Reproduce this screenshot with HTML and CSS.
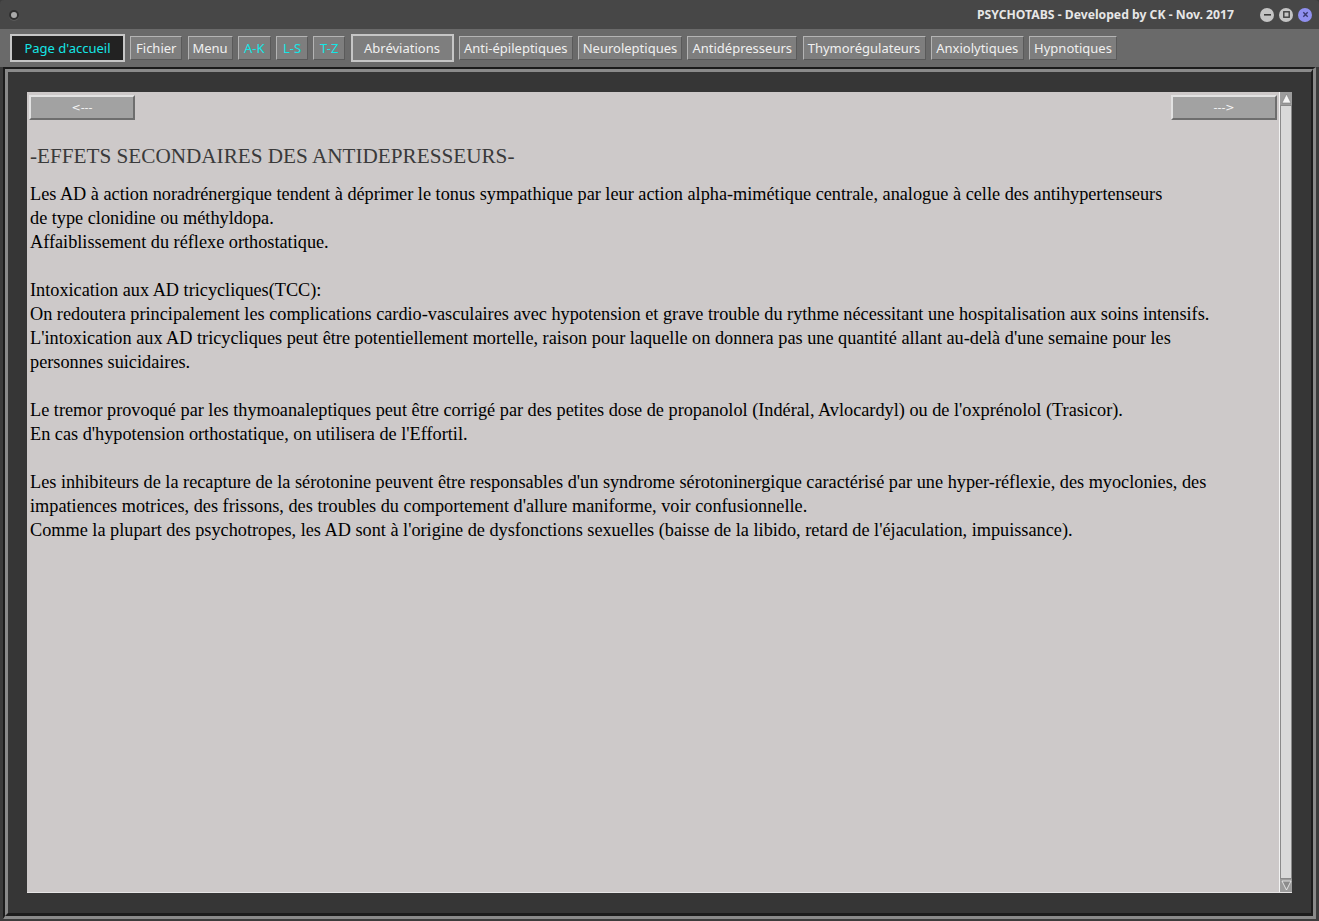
FILE: index.html
```html
<!DOCTYPE html>
<html lang="fr">
<head>
<meta charset="utf-8">
<title>PSYCHOTABS</title>
<link rel="stylesheet" href="styles.css">
</head>
<body>
<div class="window">
  <div class="titlebar">
    <span class="win-dot"></span>
    <span class="title">PSYCHOTABS - Developed by CK - Nov. 2017</span>
    <div class="win-btns">
      <span class="wb wb-min"><svg width="13" height="13" viewBox="0 0 13 13"><rect x="3" y="6" width="7" height="1.6" fill="#3c3c3c"/></svg></span>
      <span class="wb wb-max"><svg width="13" height="13" viewBox="0 0 13 13"><rect x="3.8" y="3.8" width="5.4" height="5.4" fill="none" stroke="#3c3c3c" stroke-width="1.4"/></svg></span>
      <span class="wb wb-close"><svg width="13" height="13" viewBox="0 0 13 13"><path d="M4.3 4.3 L8.7 8.7 M8.7 4.3 L4.3 8.7" stroke="#3a3a70" stroke-width="1.4"/></svg></span>
    </div>
  </div>
  <div class="toolbar">
    <span class="tb tb-big tb-home">Page d'accueil</span>
    <span class="tb b-fichier">Fichier</span>
    <span class="tb b-menu">Menu</span>
    <span class="tb tb-cyan b-ak">A-K</span>
    <span class="tb tb-cyan b-ls">L-S</span>
    <span class="tb tb-cyan b-tz">T-Z</span>
    <span class="tb tb-big tb-abr">Abréviations</span>
    <span class="tb b-antiep">Anti-épileptiques</span>
    <span class="tb b-neuro">Neuroleptiques</span>
    <span class="tb b-antidep">Antidépresseurs</span>
    <span class="tb b-thymo">Thymorégulateurs</span>
    <span class="tb b-anxio">Anxiolytiques</span>
    <span class="tb b-hypno">Hypnotiques</span>
  </div>
  <div class="frame">
    <div class="frame-inner">
      <div class="panel">
        <div class="textarea">
          <div class="navrow">
            <span class="navbtn">&lt;---</span>
            <span class="navbtn">---&gt;</span>
          </div>
          <h1 class="heading">-EFFETS SECONDAIRES DES ANTIDEPRESSEURS-</h1>
          <div class="body">
            <p class="line">Les AD à action noradrénergique tendent à déprimer le tonus sympathique par leur action alpha-mimétique centrale, analogue à celle des antihypertenseurs</p>
            <p class="line">de type clonidine ou méthyldopa.</p>
            <p class="line">Affaiblissement du réflexe orthostatique.</p>
            <p class="line blank">&nbsp;</p>
            <p class="line">Intoxication aux AD tricycliques(TCC):</p>
            <p class="line">On redoutera principalement les complications cardio-vasculaires avec hypotension et grave trouble du rythme nécessitant une hospitalisation aux soins intensifs.</p>
            <p class="line">L'intoxication aux AD tricycliques peut être potentiellement mortelle, raison pour laquelle on donnera pas une quantité allant au-delà d'une semaine pour les</p>
            <p class="line">personnes suicidaires.</p>
            <p class="line blank">&nbsp;</p>
            <p class="line">Le tremor provoqué par les thymoanaleptiques peut être corrigé par des petites dose de propanolol (Indéral, Avlocardyl) ou de l'oxprénolol (Trasicor).</p>
            <p class="line">En cas d'hypotension orthostatique, on utilisera de l'Effortil.</p>
            <p class="line blank">&nbsp;</p>
            <p class="line">Les inhibiteurs de la recapture de la sérotonine peuvent être responsables d'un syndrome sérotoninergique caractérisé par une hyper-réflexie, des myoclonies, des</p>
            <p class="line">impatiences motrices, des frissons, des troubles du comportement d'allure maniforme, voir confusionnelle.</p>
            <p class="line">Comme la plupart des psychotropes, les AD sont à l'origine de dysfonctions sexuelles (baisse de la libido, retard de l'éjaculation, impuissance).</p>
          </div>
        </div>
        <div class="scrollbar">
          <span class="arrow arrow-up"><svg width="11" height="11" viewBox="0 0 11 11"><path d="M5.5 1 L10 10 L1 10 Z" fill="#f4f4f4" stroke="#7a7a7a" stroke-width="0.6"/></svg></span>
          <span class="trough"></span>
          <span class="arrow arrow-down"><svg width="11" height="11" viewBox="0 0 11 11"><path d="M1 1 L10 1 L5.5 10 Z" fill="#8c8c8c" stroke="#f4f4f4" stroke-width="0.8"/></svg></span>
        </div>
      </div>
    </div>
  </div>
</div>
</body>
</html>
```

FILE: styles.css
```css
* { box-sizing: border-box; }
html, body { margin: 0; padding: 0; }
body {
  width: 1319px;
  height: 921px;
  background: #3a3a3a;
  overflow: hidden;
  font-family: "Noto Sans", "DejaVu Sans", sans-serif;
}
.window {
  width: 1319px;
  height: 921px;
  display: flex;
  flex-direction: column;
  background: #3c3c3c;
}
.titlebar {
  height: 29px;
  background: #474747;
  display: flex;
  align-items: center;
  padding: 0 7px 0 9px;
  border-radius: 4px 4px 0 0;
}
.win-dot {
  width: 10px;
  height: 10px;
  border-radius: 50%;
  background: #a9a9a9;
  border: 2px solid #2e2e2e;
  box-shadow: 0 1px 0 #5a5a5a;
}
.title {
  margin-left: auto;
  color: #e6e6e6;
  font-weight: bold;
  font-size: 12.2px;
  margin-right: 26px;
}
.win-btns {
  display: flex;
  gap: 5px;
}
.wb {
  width: 14px;
  height: 14px;
  border-radius: 50%;
  display: flex;
  align-items: center;
  justify-content: center;
  background: #c4c4c4;
}
.wb-close { background: #9090f0; }
.toolbar {
  height: 38px;
  background: #6a6a6a;
  display: flex;
  align-items: center;
  padding: 0 0 0 10px;
  gap: 5.25px;
}
.tb {
  height: 24px;
  padding: 0;
  display: flex;
  align-items: center;
  justify-content: center;
  flex: none;
  background: #7e7e7e;
  color: #f0f0f0;
  font-size: 13px;
  border-top: 1px solid #b4b4b4;
  border-left: 1px solid #b4b4b4;
  border-right: 1px solid #5a5a5a;
  border-bottom: 1px solid #5a5a5a;
  white-space: nowrap;
}
.tb-cyan { color: #14e6e6; }
.tb-big {
  height: 28px;
  border: 2px solid #c6c6c6;
}
.tb-home {
  background: #222222;
  color: #14e6e6;
  width: 115px;
}
.tb-abr { width: 103px; }
.b-fichier { width: 52px; }
.b-menu { width: 45px; }
.b-ak { width: 33px; }
.b-ls { width: 32px; }
.b-tz { width: 32px; }
.b-antiep { width: 114px; }
.b-neuro { width: 104px; }
.b-antidep { width: 110px; }
.b-thymo { width: 123px; }
.b-anxio { width: 93px; }
.b-hypno { width: 88px; }
.frame {
  flex: 1;
  margin: 0 3px 2px 3px;
  border-top: 2px solid #1c1c1c;
  border-left: 2px solid #1c1c1c;
  border-right: 3px solid #8a8a8a;
  border-bottom: 3px solid #8a8a8a;
  display: flex;
}
.frame-inner {
  flex: 1;
  border-top: 3px solid #8a8a8a;
  border-left: 3px solid #8a8a8a;
  border-right: 2px solid #1c1c1c;
  border-bottom: 3px solid #1c1c1c;
  background: #363636;
  padding: 20px 19px 20px 19px;
  display: flex;
}
.panel {
  flex: 1;
  background: #cdc9c9;
  display: flex;
  border-bottom: 1px solid #e6e4e4;
}
.textarea {
  flex: 1;
  padding: 3px 2px 0 2px;
  font-family: "Liberation Serif", "Times New Roman", serif;
}
.navrow {
  display: flex;
  justify-content: space-between;
}
.navbtn {
  width: 106px;
  height: 25px;
  background: #a2a2a2;
  color: #f6f6f6;
  font-family: "DejaVu Sans", sans-serif;
  font-size: 11px;
  display: flex;
  align-items: center;
  justify-content: center;
  border-top: 2px solid #e2e2e2;
  border-left: 2px solid #e2e2e2;
  border-right: 2px solid #6e6e6e;
  border-bottom: 2px solid #6e6e6e;
}
.heading {
  margin: 23px 0 0 1px;
  font-weight: normal;
  font-size: 21.2px;
  line-height: 26px;
  color: #3a3a3a;
}
.body {
  margin: 13px 0 0 1px;
  font-size: 18.25px;
  line-height: 24px;
  color: #000;
}
.line {
  margin: 0;
  white-space: nowrap;
}
.scrollbar {
  width: 13px;
  display: flex;
  flex-direction: column;
  background: #d9d9d9;
  border-left: 1px solid #f2f2f2;
}
.arrow {
  height: 13px;
  background: #9c9c9c;
  display: flex;
  align-items: center;
  justify-content: center;
}
.trough {
  flex: 1;
  border: 1px solid #8a8a8a;
  background: #d9d9d9;
}
```
